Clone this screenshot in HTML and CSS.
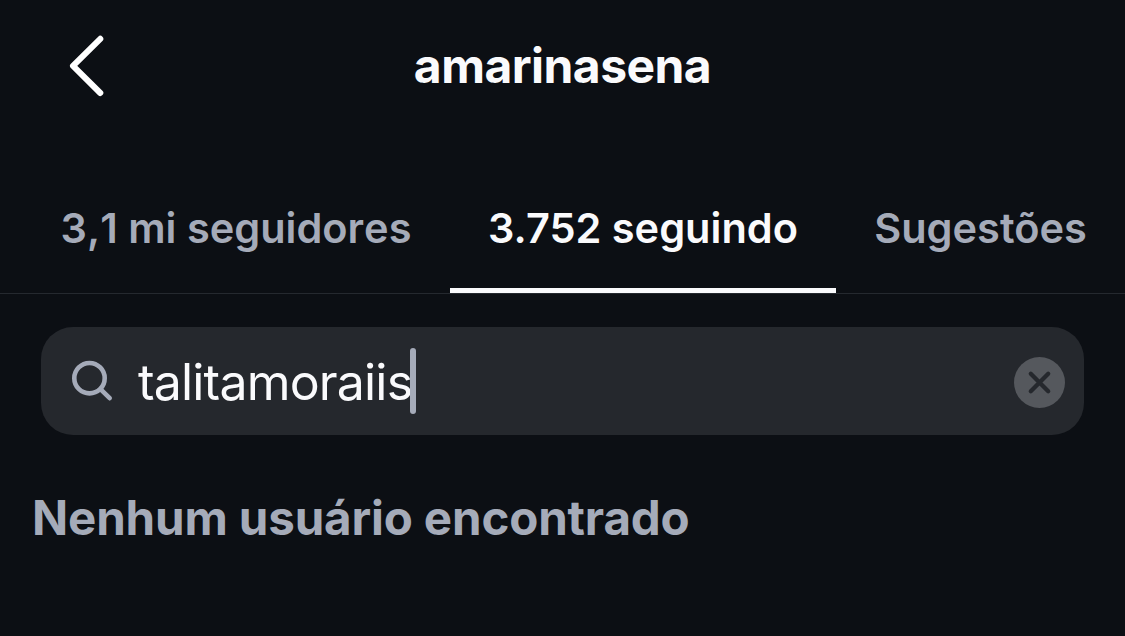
FILE: index.html
```html
<!DOCTYPE html>
<html lang="pt-BR">
<head>
  <meta charset="UTF-8" />
  <title>amarinasena</title>
  <link rel="stylesheet" href="styles.css">
</head>
<body>

  <header class="topbar">
    <a class="back" href="#" aria-label="Voltar">
      <svg width="40" height="64" viewBox="0 0 40 64">
        <path d="M34.300 4.800 L7 31.900 L34.300 59" />
      </svg>
    </a>
    <h1><span>amarinasena</span></h1>
  </header>

  <nav class="tabs">
    <a class="tab followers" href="#"><span>3,1 mi seguidores</span></a>
    <a class="tab following active" href="#"><span>3.752 seguindo</span></a>
    <a class="tab suggestions" href="#"><span>Sugestões</span></a>
  </nav>

  <main>
    <div class="search">
      <svg class="search-icon" width="44" height="44" viewBox="0 0 44 44">
        <circle cx="18.500" cy="19.200" r="15.200" />
        <path d="M29.700 30.300 L38.700 39.200" />
      </svg>
      <span class="query">talitamoraiis</span>
      <span class="caret"></span>
      <button class="clear" aria-label="Limpar">
        <svg width="51" height="51" viewBox="0 0 51 51">
          <circle cx="25.500" cy="25.500" r="25.500" />
          <path d="M16.800 16.800 L34.200 34.200 M34.200 16.800 L16.800 34.200" />
        </svg>
      </button>
    </div>

    <h2 class="empty"><span>Nenhum usuário encontrado</span></h2>
  </main>

</body>
</html>
```
FILE: styles.css
```css
* {
  box-sizing: border-box;
}

body {
  margin: 0;
  height: 636px;
  overflow: hidden;
  background: #0c0f14;
  color: #fafafc;
  font-family: Inter, "Liberation Sans", sans-serif;
}

a {
  color: inherit;
  text-decoration: none;
}

.topbar {
  display: grid;
  grid-template-columns: 112px 1fr 112px;
  align-items: center;
  height: 132px;
}

.back {
  padding-left: 66px;
  height: 64px;
}

.back svg {
  display: block;
  fill: none;
  stroke: #fff;
  stroke-width: 6;
  stroke-linecap: round;
  stroke-linejoin: round;
}

h1 {
  margin: 0;
  text-align: center;
  font-size: 48px;
  font-weight: 700;
  letter-spacing: -0.550px;
  line-height: 60px;
}

.tabs {
  display: flex;
  height: 162px;
  padding-top: 32px;
  border-bottom: 1px solid #25292f;
}

.tab {
  display: flex;
  align-items: center;
  justify-content: center;
  height: 129px;
  padding-top: 3px;
  color: #a5abb9;
  font-size: 41.500px;
  font-weight: 600;
  white-space: nowrap;
  border-bottom: 5px solid transparent;
}

.followers {
  width: 386px;
  margin: 0 21px 0 43px;
  font-kerning: none;
}

.following {
  width: 386px;
}

.suggestions {
  width: 289px;
}

.active {
  color: #fafafc;
  border-bottom-color: #fafafc;
}

.search {
  display: flex;
  align-items: center;
  height: 108px;
  margin: 33px 41px 0;
  padding: 0 19px 0 30px;
  background: #25282d;
  border-radius: 32px;
}

.search-icon {
  fill: none;
  stroke: #a5abb9;
  stroke-width: 4.600;
  stroke-linecap: round;
}

.query {
  margin-left: 23px;
  padding-top: 2px;
  font-size: 50px;
  letter-spacing: -0.820px;
  line-height: 60px;
}

.caret {
  width: 6px;
  height: 66px;
  margin-left: -2px;
  border-radius: 3px;
  background: #a5abb9;
}

.clear {
  width: 51px;
  height: 51px;
  margin: 2px 0 0 auto;
  padding: 0;
  border: 0;
  background: none;
}

.clear svg {
  display: block;
  fill: #55585d;
  stroke-linecap: round;
}

.clear path {
  stroke: #25282d;
  stroke-width: 4.300;
}

.empty {
  margin: 53px 32px 0;
  color: #a5abb9;
  font-size: 47.500px;
  font-weight: 700;
  letter-spacing: -0.150px;
  line-height: 60px;
}
```
